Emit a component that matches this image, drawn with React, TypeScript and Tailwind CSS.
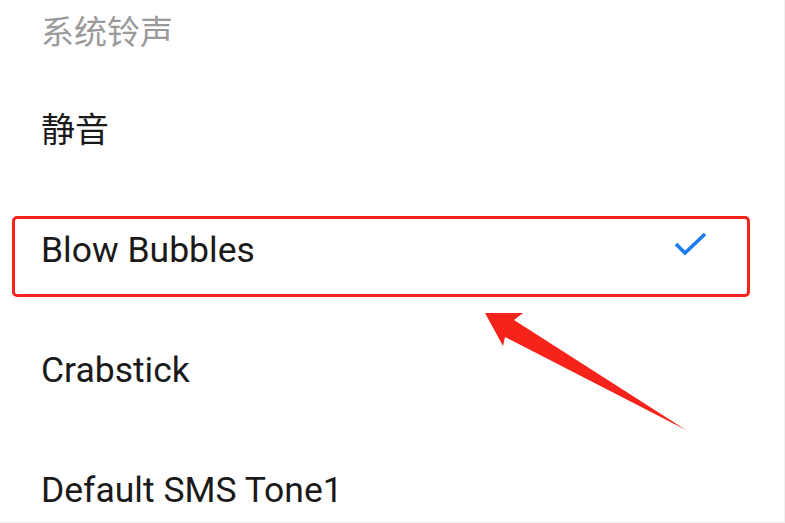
import React from "react";

const font = { fontFamily: 'Roboto, "Noto Sans CJK SC", sans-serif' };

function Row({ label, checked, highlight }: { label: string; checked?: boolean; highlight?: boolean }) {
  return (
    <div className="relative flex h-[120px] items-center justify-between pl-[41px] pr-[76px]">
      <span className="text-[35.5px] leading-[42px] text-[#1a1a1a]">{label}</span>
      {checked && (
        <svg width="34" height="26" viewBox="0 0 34 26" className="-mt-[10px]">
          <polyline points="2,12 11,21 31,2" fill="none" stroke="#1a7cf0" strokeWidth="3.6" />
        </svg>
      )}
      {highlight && (
        <div className="absolute left-[12px] top-[26px] h-[81px] w-[738px] rounded-[5px] border-[3px] border-[#f5231a]" />
      )}
    </div>
  );
}

export default function App() {
  return (
    <div className="relative h-[523px] w-[785px] overflow-hidden bg-white" style={font}>
      <div className="h-[522px] border-r border-[#f0f0f0]">
        <div className="h-[70px] pl-[41px] pt-[12px]">
          <span className="text-[33px] leading-[42px] text-[#9a9a9a]">系统铃声</span>
        </div>
        <div className="relative flex h-[120px] items-center pl-[41px]">
          <span className="text-[34px] leading-[42px] text-[#1a1a1a]">静音</span>
        </div>
        <Row label="Blow Bubbles" checked highlight />
        <Row label="Crabstick" />
        <Row label="Default SMS Tone1" />
      </div>
      <div className="h-[1px] bg-[#f0f0f0]" />
      <svg className="absolute left-0 top-0" width="785" height="523" viewBox="0 0 785 523">
        <polygon points="485,313 523,313 514,320 686,430 505,337 503,346" fill="#f5231a" />
      </svg>
    </div>
  );
}
